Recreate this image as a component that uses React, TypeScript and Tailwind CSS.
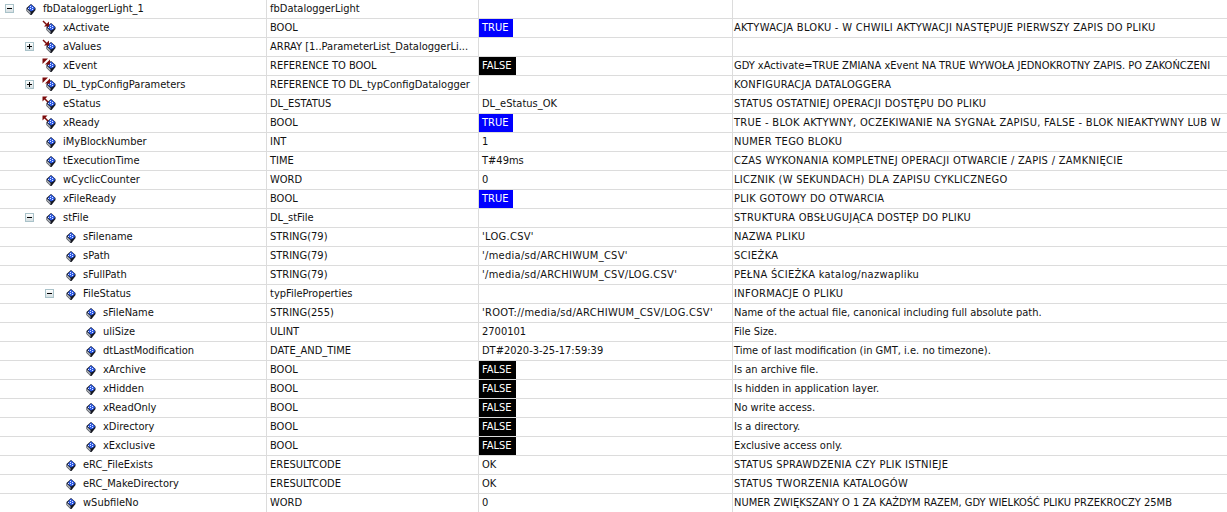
const rows: Row[] = [
  { d: 0, t: "minus", i: "none", n: "fbDataloggerLight_1", ty: "fbDataloggerLight" },
  { d: 1, i: "in", n: "xActivate", ty: "BOOL", v: "TRUE", c: "AKTYWACJA BLOKU - W CHWILI AKTYWACJI NASTĘPUJE PIERWSZY ZAPIS DO PLIKU" },
  { d: 1, t: "plus", i: "in", n: "aValues", ty: "ARRAY [1..ParameterList_DataloggerLi..." },
  { d: 1, i: "inout", n: "xEvent", ty: "REFERENCE TO BOOL", v: "FALSE", c: "GDY xActivate=TRUE ZMIANA xEvent NA TRUE WYWOŁA JEDNOKROTNY ZAPIS. PO ZAKOŃCZENI" },
  { d: 1, t: "plus", i: "inout", n: "DL_typConfigParameters", ty: "REFERENCE TO DL_typConfigDatalogger", c: "KONFIGURACJA DATALOGGERA" },
  { d: 1, i: "out", n: "eStatus", ty: "DL_ESTATUS", v: "DL_eStatus_OK", c: "STATUS OSTATNIEJ OPERACJI DOSTĘPU DO PLIKU" },
  { d: 1, i: "out", n: "xReady", ty: "BOOL", v: "TRUE", c: "TRUE - BLOK AKTYWNY, OCZEKIWANIE NA SYGNAŁ ZAPISU, FALSE - BLOK NIEAKTYWNY LUB W" },
  { d: 1, i: "none", n: "iMyBlockNumber", ty: "INT", v: "1", c: "NUMER TEGO BLOKU" },
  { d: 1, i: "none", n: "tExecutionTime", ty: "TIME", v: "T#49ms", c: "CZAS WYKONANIA KOMPLETNEJ OPERACJI OTWARCIE / ZAPIS / ZAMKNIĘCIE" },
  { d: 1, i: "none", n: "wCyclicCounter", ty: "WORD", v: "0", c: "LICZNIK (W SEKUNDACH) DLA ZAPISU CYKLICZNEGO" },
  { d: 1, i: "none", n: "xFileReady", ty: "BOOL", v: "TRUE", c: "PLIK GOTOWY DO OTWARCIA" },
  { d: 1, t: "minus", i: "none", n: "stFile", ty: "DL_stFile", c: "STRUKTURA OBSŁUGUJĄCA DOSTĘP DO PLIKU" },
  { d: 2, i: "none", n: "sFilename", ty: "STRING(79)", v: "'LOG.CSV'", c: "NAZWA PLIKU" },
  { d: 2, i: "none", n: "sPath", ty: "STRING(79)", v: "'/media/sd/ARCHIWUM_CSV'", c: "SCIEŻKA" },
  { d: 2, i: "none", n: "sFullPath", ty: "STRING(79)", v: "'/media/sd/ARCHIWUM_CSV/LOG.CSV'", c: "PEŁNA ŚCIEŻKA katalog/nazwapliku" },
  { d: 2, t: "minus", i: "none", n: "FileStatus", ty: "typFileProperties", c: "INFORMACJE O PLIKU" },
  { d: 3, i: "none", n: "sFileName", ty: "STRING(255)", v: "'ROOT://media/sd/ARCHIWUM_CSV/LOG.CSV'", c: "Name of the actual file, canonical including full absolute path." },
  { d: 3, i: "none", n: "uliSize", ty: "ULINT", v: "2700101", c: "File Size." },
  { d: 3, i: "none", n: "dtLastModification", ty: "DATE_AND_TIME", v: "DT#2020-3-25-17:59:39", c: "Time of last modification (in GMT, i.e. no timezone)." },
  { d: 3, i: "none", n: "xArchive", ty: "BOOL", v: "FALSE", c: "Is an archive file." },
  { d: 3, i: "none", n: "xHidden", ty: "BOOL", v: "FALSE", c: "Is hidden in application layer." },
  { d: 3, i: "none", n: "xReadOnly", ty: "BOOL", v: "FALSE", c: "No write access." },
  { d: 3, i: "none", n: "xDirectory", ty: "BOOL", v: "FALSE", c: "Is a directory." },
  { d: 3, i: "none", n: "xExclusive", ty: "BOOL", v: "FALSE", c: "Exclusive access only." },
  { d: 2, i: "none", n: "eRC_FileExists", ty: "ERESULTCODE", v: "OK", c: "STATUS SPRAWDZENIA CZY PLIK ISTNIEJE" },
  { d: 2, i: "none", n: "eRC_MakeDirectory", ty: "ERESULTCODE", v: "OK", c: "STATUS TWORZENIA KATALOGÓW" },
  { d: 2, i: "none", n: "wSubfileNo", ty: "WORD", v: "0", c: "NUMER ZWIĘKSZANY O 1 ZA KAŻDYM RAZEM, GDY WIELKOŚĆ PLIKU PRZEKROCZY 25MB" },
];

type Row = {
  d: number;
  t?: "plus" | "minus";
  i: "none" | "in" | "inout" | "out";
  n: string;
  ty: string;
  v?: string;
  c?: string;
};

// tree indent per depth level
const indents = ["w-[0px]", "w-[20px]", "w-[40px]", "w-[60px]"];

// capitals run a bit wider in the reference than in the condensed font
const wide = (s?: string) => (s && /[A-Z]{3}/.test(s) && !/xActivate|GMT|ZWIĘKSZANY/.test(s) ? "tracking-[0.3px]" : "");

function Toggle({ kind }: { kind: "plus" | "minus" }) {
  return (
    <span className="relative mb-[1px] block h-[9px] w-[9px] border border-[#a9c2c9] bg-gradient-to-b from-white to-[#d5dfe2]">
      <span className="absolute left-[1px] top-[3px] h-[1px] w-[5px] bg-black" />
      {kind === "plus" && <span className="absolute left-[3px] top-[1px] h-[5px] w-[1px] bg-black" />}
    </span>
  );
}

// the little cube used for every variable
function VarIcon({ kind }: { kind: Row["i"] }) {
  const red = "#7d0c0c";
  return (
    <svg width="20" height="16" viewBox="0 0 20 16" className="block shrink-0">
      <path d="M9 3 L13.5 7 V9 L9.5 14 H8.5 L4.5 10 V7 Z" fill="#14161f" />
      <path d="M9 3.5 L13 7 L12 9 L9 10.5 L5.5 7.5 Z" fill="#2f5ce6" />
      <path d="M5 8 L8.5 11 V13.5 L5 10 Z" fill="#aab0b8" />
      <g fill="#e2e9ff">
        <rect x="8" y="5" width="1" height="1" />
        <rect x="10" y="6" width="1" height="1" />
        <rect x="8" y="7" width="1" height="1" />
        <rect x="6" y="7" width="1" height="1" />
        <rect x="10" y="8" width="1" height="1" />
      </g>
      {kind === "in" && (
        <>
          <path d="M7 1.5 V6.5 H2 Z" fill={red} />
          <path d="M1 1 L5 5" stroke={red} strokeWidth="1.5" />
        </>
      )}
      {kind === "inout" && (
        <>
          <path d="M0.5 0.5 H6 L0.5 6 Z" fill={red} />
          <path d="M8 1.5 V6.5 H3 Z" fill={red} />
        </>
      )}
      {kind === "out" && (
        <>
          <path d="M0.5 0.5 H5.5 L0.5 5.5 Z" fill={red} />
          <path d="M2.5 2.5 L6 6" stroke={red} strokeWidth="1.5" />
        </>
      )}
    </svg>
  );
}

function Cell({ v }: { v?: string }) {
  if (v === "TRUE") return <span className="flex h-[18px] w-[34px] items-center bg-[#0000ff] pl-[3px] text-white">TRUE</span>;
  if (v === "FALSE") return <span className="flex h-[18px] w-[37px] items-center bg-black pl-[3px] text-white">FALSE</span>;
  return <span className={`pl-[3px] ${wide(v)}`}>{v}</span>;
}

export default function App() {
  return (
    <div className="h-[512px] w-[1227px] overflow-hidden bg-white font-['DejaVu_Sans',sans-serif] [font-stretch:condensed] text-[11px] text-[#111]">
      {rows.map((r, idx) => (
        <div key={idx} className="flex h-[19px] items-center border-b border-[#dcdcdc] whitespace-nowrap">
          <div className="flex h-full w-[267px] shrink-0 items-center border-r border-[#dcdcdc] pl-[5px]">
            <span className={indents[r.d]} />
            <span className="flex w-[17px] shrink-0 items-center">{r.t && <Toggle kind={r.t} />}</span>
            <VarIcon kind={r.i} />
            <span className="ml-[1px]">{r.n}</span>
          </div>
          <div className="flex h-full w-[212px] shrink-0 items-center overflow-hidden border-r border-[#dcdcdc] pl-[3px]">{r.ty}</div>
          <div className="flex h-full w-[254px] shrink-0 items-center overflow-hidden border-r border-[#dcdcdc]">
            <Cell v={r.v} />
          </div>
          <div className={`flex-1 overflow-hidden pl-[1px] ${wide(r.c)}`}>{r.c}</div>
        </div>
      ))}
    </div>
  );
}
